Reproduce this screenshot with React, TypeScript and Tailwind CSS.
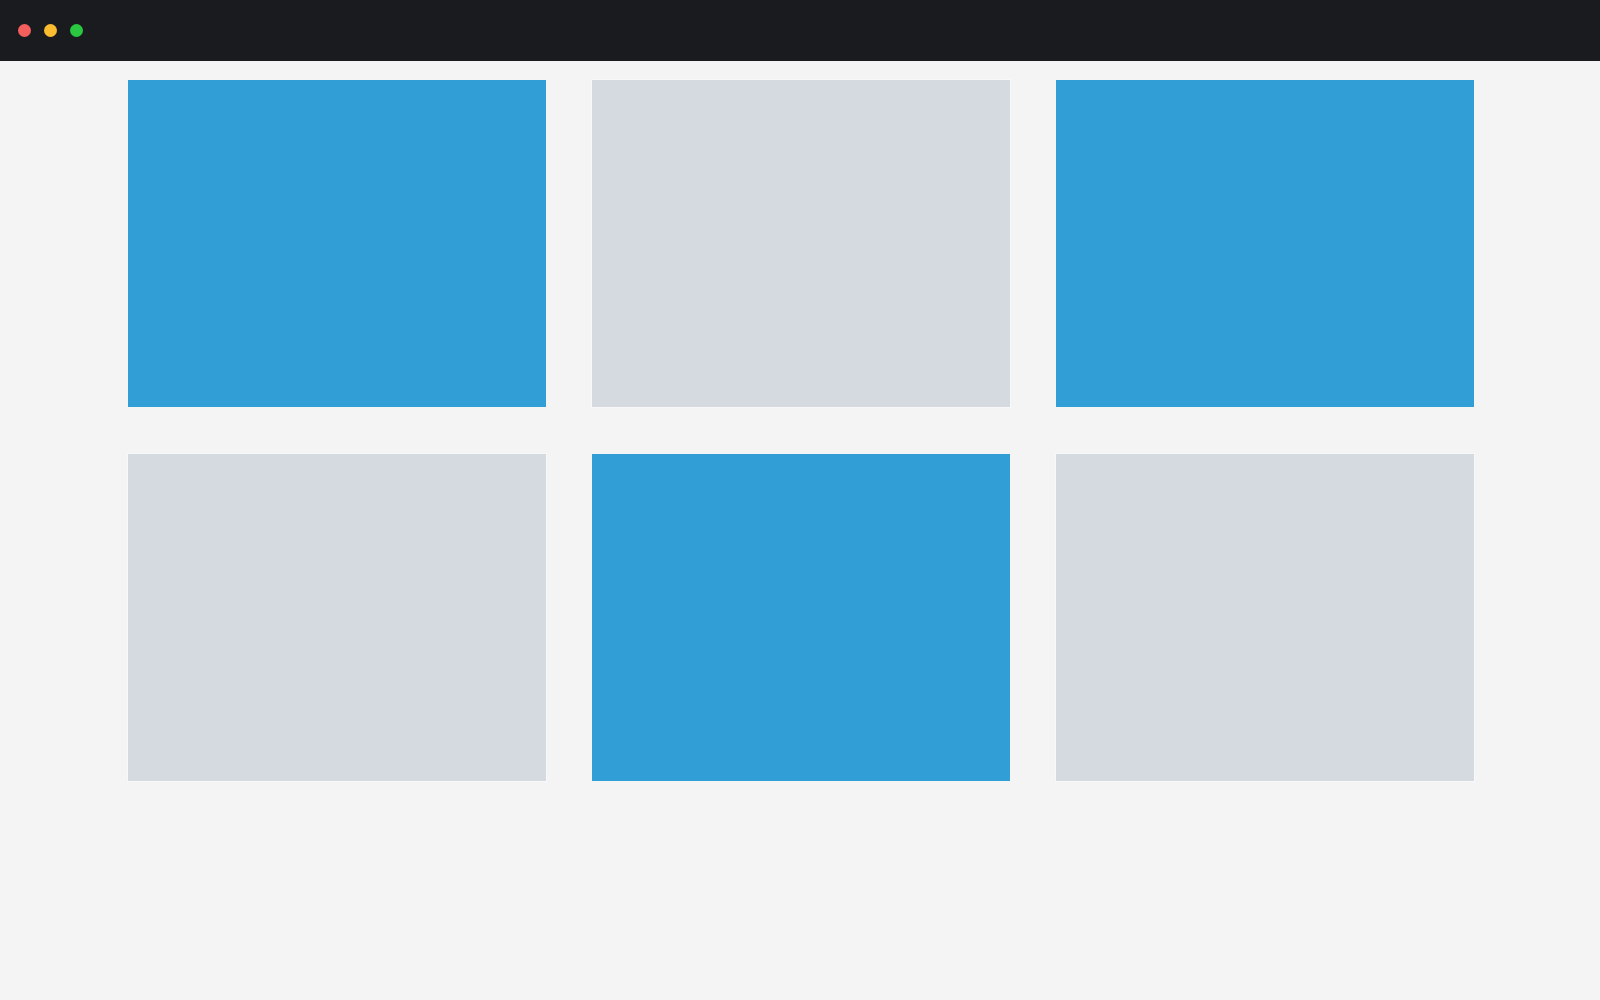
const TILES = [true, false, true, false, true, false];

export default function App() {
  return (
    <div className="min-h-screen w-full bg-[#f4f4f4]">
      {/* window chrome */}
      <div className="flex h-[61px] items-center gap-[13px] bg-[#1a1b1f] pl-[18px]">
        <span className="h-[13px] w-[13px] rounded-full bg-[#f25f5c]" />
        <span className="h-[13px] w-[13px] rounded-full bg-[#fbbc2f]" />
        <span className="h-[13px] w-[13px] rounded-full bg-[#2ac840]" />
      </div>

      {/* tile grid */}
      <div className="mx-auto grid w-[1346px] translate-x-[1px] grid-cols-3 gap-x-[46px] gap-y-[47px] pt-[19px]">
        {TILES.map((active, i) => (
          <div
            key={i}
            className={`h-[327px] ${
              active ? 'bg-[#319fd6]' : 'bg-[#d5d9e0] ring-1 ring-white/40'
            }`}
          />
        ))}
      </div>
    </div>
  );
}
